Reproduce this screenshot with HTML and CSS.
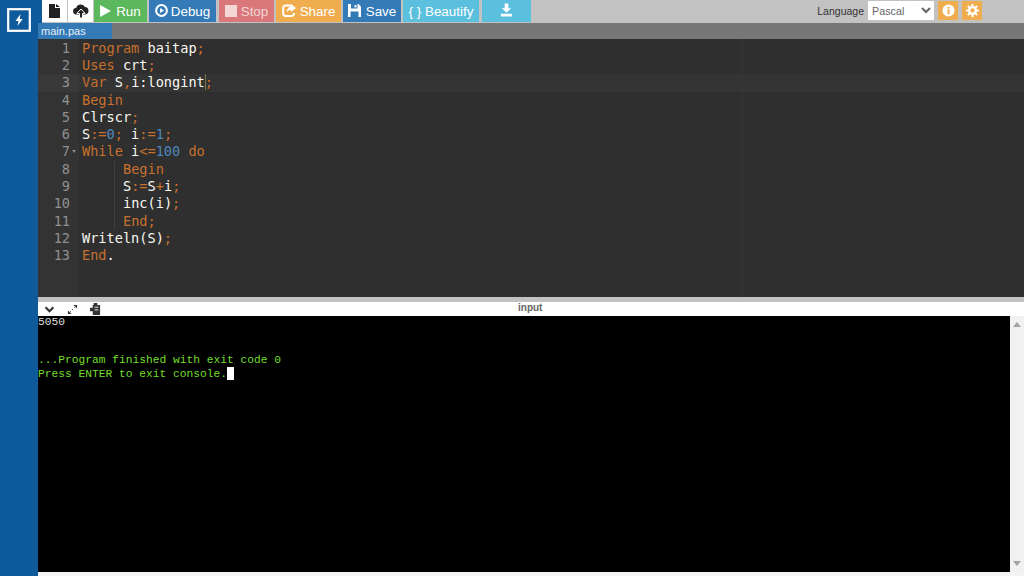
FILE: index.html
```html
<!DOCTYPE html>
<html lang="en">
<head>
<meta charset="utf-8">
<title>main.pas</title>
<link rel="stylesheet" href="styles.css">
</head>
<body>
<div class="app">
  <aside class="sidebar">
    <div class="logo">
      <svg viewBox="0 0 24 24" width="24" height="24"><rect x="1.2" y="1.2" width="21.6" height="21.6" fill="none" stroke="#fff" stroke-width="2.2"/><path d="M13.5 6 8.500 13h3l-1 5 5.200-7h-3z" fill="#fff"/></svg>
    </div>
  </aside>
  <main class="main">
    <header class="toolbar">
      <div class="tools">
        <button class="btn icon-btn first"><svg viewBox="0 0 11 14" width="11" height="14"><path d="M0 0h6v4h5v10H0zM7 0l4 3H7z" fill="#222"/></svg></button>
        <button class="btn icon-btn second"><svg viewBox="0 0 16 14" width="16" height="14"><path d="M3.500 10.500a3.200 3.200 0 0 1-.4-6.400A4.800 4.800 0 0 1 12 3a3.800 3.800 0 0 1 .5 7.500z" fill="#222"/><path d="M8 5 3.800 9.500H6.500V14h3V9.500h2.700z" fill="#222" stroke="#fff" stroke-width="1"/></svg></button>
        <button class="btn run"><svg viewBox="0 0 10 11" width="11" height="12"><path d="M0 0l10 5.500L0 11z" fill="#fff"/></svg>Run</button>
        <button class="btn debug"><svg class="raised" viewBox="0 0 13 13" width="13" height="13"><circle cx="6.500" cy="6.500" r="5.400" fill="none" stroke="#fff" stroke-width="2"/><path d="M5 4l4 2.500L5 9z" fill="#fff"/></svg>Debug</button>
        <button class="btn stop"><svg viewBox="0 0 12 12" width="12" height="12"><rect width="12" height="12" fill="#f3d6d6"/></svg>Stop</button>
        <button class="btn share"><svg class="raised" viewBox="0 0 14 13" width="14" height="13"><path d="M9.500 1.500H4A2.500 2.500 0 0 0 1.200 4v6A2.500 2.500 0 0 0 4 12h5.500A2.500 2.500 0 0 0 12 10V9" fill="none" stroke="#fff" stroke-width="2"/><path d="M9 0l5 4-5 4V6C7 6 5.500 6.800 5 8.500 4.800 5.500 6.500 2.800 9 2.600z" fill="#fff"/></svg>Share</button>
        <button class="btn save"><svg class="raised" viewBox="0 0 13 13" width="13" height="13"><path d="M0 0h10.500L13 2.500V13H0z" fill="#fff"/><rect x="3" y="0" width="6.500" height="4.500" fill="#337ab7"/><rect x="6.500" y="1" width="2" height="2.500" fill="#fff"/><rect x="2.500" y="7.500" width="8" height="5.500" fill="#337ab7"/></svg>Save</button>
        <button class="btn beautify">{ } Beautify</button>
        <button class="btn download"><svg class="raised" viewBox="0 0 14 14" width="13" height="14"><path d="M5 0h4v5h3L7 10 2 5h3zM1 11h12v3H1z" fill="#fff"/></svg></button>
      </div>
      <div class="settings">
        <label class="lang-label" for="lang">Language</label>
        <select class="lang" id="lang"><option>Pascal</option></select>
        <button class="mini"><svg viewBox="0 0 14 14" width="13" height="13"><circle cx="7" cy="7" r="6.500" fill="#fff"/><rect x="6" y="6" width="2.200" height="5" fill="#f0ad4e"/><rect x="6" y="3" width="2.200" height="2" fill="#f0ad4e"/></svg></button>
        <button class="mini"><svg viewBox="0 0 14 14" width="13" height="13"><circle cx="7" cy="7" r="3.600" fill="none" stroke="#fff" stroke-width="2.600"/><path d="M7 0v3M7 11v3M0 7h3M11 7h3M2 2l2 2M10 10l2 2M12 2l-2 2M4 10l-2 2" stroke="#fff" stroke-width="2.200"/></svg></button>
      </div>
    </header>
    <nav class="tabs"><span class="tab">main.pas</span></nav>
    <section class="editor">
      <div class="gutter">
        <div>1</div><div>2</div><div class="g-active">3</div><div>4</div><div>5</div><div>6</div><div class="fold">7</div><div>8</div><div>9</div><div>10</div><div>11</div><div>12</div><div>13</div>
      </div>
      <div class="code">
        <div class="ln"><span class="k">Program</span> baitap<span class="k">;</span></div>
        <div class="ln"><span class="k">Uses</span> crt<span class="k">;</span></div>
        <div class="ln active"><span class="k">Var</span> S<span class="k">,</span>i:longint<span class="bracket k">;</span></div>
        <div class="ln"><span class="k">Begin</span></div>
        <div class="ln">Clrscr<span class="k">;</span></div>
        <div class="ln">S<span class="k">:=</span><span class="n">0</span><span class="k">;</span> i<span class="k">:=</span><span class="n">1</span><span class="k">;</span></div>
        <div class="ln"><span class="k">While</span> i<span class="k">&lt;=</span><span class="n">100</span> <span class="k">do</span></div>
        <div class="ln ind"><span class="k">Begin</span></div>
        <div class="ln ind">S<span class="k">:=</span>S<span class="k">+</span>i<span class="k">;</span></div>
        <div class="ln ind">inc(i)<span class="k">;</span></div>
        <div class="ln ind"><span class="k">End;</span></div>
        <div class="ln">Writeln(S)<span class="k">;</span></div>
        <div class="ln"><span class="k">End</span>.</div>
      </div>
    </section>
    <div class="splitter"></div>
    <div class="io-head">
      <div class="io-tools">
        <svg viewBox="0 0 12 8" width="11" height="7"><path d="M1.500 1.500 6 6l4.500-4.500" fill="none" stroke="#333" stroke-width="2.400"/></svg>
        <svg viewBox="0 0 12 12" width="11" height="11"><path d="M7 1h4v4zM5 11H1V7z" fill="#333"/><path d="M9 3 3 9" stroke="#333" stroke-width="1" stroke-dasharray="1.500 2"/></svg>
        <svg viewBox="0 0 12 13" width="11" height="12"><path d="M4 0h4v2h3v11H3V9H0V5h3V2h1z" fill="#333"/><rect x="5" y="4" width="4" height="1" fill="#fff"/><rect x="5" y="7" width="4" height="1" fill="#fff"/></svg>
      </div>
      <div class="io-title">input</div>
    </div>
    <section class="console-wrap">
      <div class="console">
        <div class="out">5050</div>
        <div class="out">&nbsp;</div>
        <div class="out">&nbsp;</div>
        <div class="ok">...Program finished with exit code 0</div>
        <div class="ok">Press ENTER to exit console.<span class="cursor"></span></div>
      </div>
      <div class="scrollbar">
        <svg viewBox="0 0 8 5" width="8" height="5"><path d="M4 0l4 5H0z" fill="#a3a3a3"/></svg>
        <svg viewBox="0 0 8 5" width="8" height="5"><path d="M4 5 8 0H0z" fill="#a3a3a3"/></svg>
      </div>
    </section>
    <div class="foot"></div>
  </main>
</div>
</body>
</html>
```
FILE: styles.css
```css
* { box-sizing: border-box; }
html, body { margin: 0; height: 100%; overflow: hidden; }
body { font-family: "Liberation Sans", Arial, sans-serif; background: #fff; }
.app { display: flex; width: 1024px; height: 576px; }
.sidebar { width: 38px; flex: none; background: #0f5a9b; padding: 8px 0 0 7px; }
.logo { width: 24px; height: 24px; }
.logo svg { display: block; }
.main { flex: 1; min-width: 0; display: flex; flex-direction: column; }

.toolbar { height: 23px; flex: none; background: #c2c2c2; display: flex; justify-content: space-between; border-left: 4px solid #0f5a9b; }
.tools { display: flex; gap: 2px; }
.btn { height: 22px; border: 0; padding: 0; margin: 0; color: #fff; font: 13.400px "Liberation Sans", Arial, sans-serif; display: flex; align-items: center; justify-content: center; gap: 5px; }
.raised { position: relative; top: -1px; }
.icon-btn { background: #fff; }
.first { width: 25px; }
.second { width: 25px; margin-left: -1px; }
.run { width: 53px; background: #5cb85c; margin-left: -1px; }
.debug { width: 67px; background: #337ab7; gap: 3px; }
.stop { width: 55px; background: #d9777a; color: #f3d6d6; margin-left: 1px; gap: 4px; }
.share { width: 65px; background: #f0ad4e; gap: 4px; }
.save { width: 58px; background: #337ab7; }
.beautify { width: 76px; background: #5bc0de; }
.download { width: 49px; background: #5bc0de; margin-left: 1px; }
.settings { display: flex; align-items: flex-start; padding: 1px 42px 0 0; gap: 4px; }
.lang-label { font-size: 10.500px; color: #333; line-height: 20px; }
.lang { width: 66px; height: 19px; border: 0; background: #fff; color: #666; font: 10.800px "Liberation Sans", Arial, sans-serif; padding: 0; }
.mini { width: 20px; height: 19px; padding: 0; border: 0; background: #f0ad4e; display: flex; align-items: center; justify-content: center; }

.tabs { height: 16px; flex: none; background: #777; display: flex; }
.tab { width: 74px; background: #337ab7; color: #e8f0f8; font-size: 11px; line-height: 16px; padding-left: 3px; }

.editor { height: 258px; flex: none; background: #2f2f2f; display: flex; font: 13.600px/17.300px "DejaVu Sans Mono", "Liberation Mono", monospace; position: relative; overflow: hidden; padding-top: 0.700px; }
.editor::after { content: ""; position: absolute; left: 704px; top: 0; bottom: 0; width: 1px; background: #363636; }
.gutter { width: 41px; flex: none; background: #333; color: #909090; text-align: right; padding: 0 9px 0 0; margin-top: -1px; padding-top: 1px; }
.g-active { background: #393939; margin-right: -9px; padding-right: 9px; }
.fold { position: relative; }
.fold::after { content: ""; position: absolute; right: -6px; top: 7px; border-left: 2px solid transparent; border-right: 2px solid transparent; border-top: 3px solid #888; }
.code { flex: 1; color: #f8f8f2; padding-left: 3px; }
.ln { height: 17.300px; white-space: pre; }
.ln.active { background: #343434; margin-left: -3px; padding-left: 3px; }
.ind { margin-left: 41px; position: relative; }
.ind::before { content: ""; position: absolute; left: -9px; top: 0; bottom: 0; width: 1px; background: #404040; }
.k { color: #c8702e; }
.n { color: #4e86b8; }
.bracket { box-shadow: inset 1px 0 0 #77774a; }

.splitter { height: 5px; flex: none; background: #c2c2c2; }
.io-head { height: 14px; flex: none; background: #fff; display: flex; align-items: center; position: relative; }
.io-tools { display: flex; align-items: center; gap: 12px; padding-left: 6px; }
.io-title { position: absolute; left: 480px; top: -1px; font-size: 10px; font-weight: bold; color: #666; line-height: 14px; }
.console-wrap { height: 256px; flex: none; display: flex; }
.console { flex: 1; background: #000; font: 11.250px/12.800px "Liberation Mono", "Courier New", monospace; }
.out { color: #ddd; }
.ok { color: #72dd2c; }
.cursor { display: inline-block; width: 7px; height: 13px; background: #fff; vertical-align: -3px; }
.scrollbar { width: 14px; flex: none; background: #f1f1f1; display: flex; flex-direction: column; justify-content: space-between; align-items: center; padding: 6px 0 6px; }
.scrollbar svg { display: block; }
.foot { flex: 1; background: #f4f4f4; }
```
